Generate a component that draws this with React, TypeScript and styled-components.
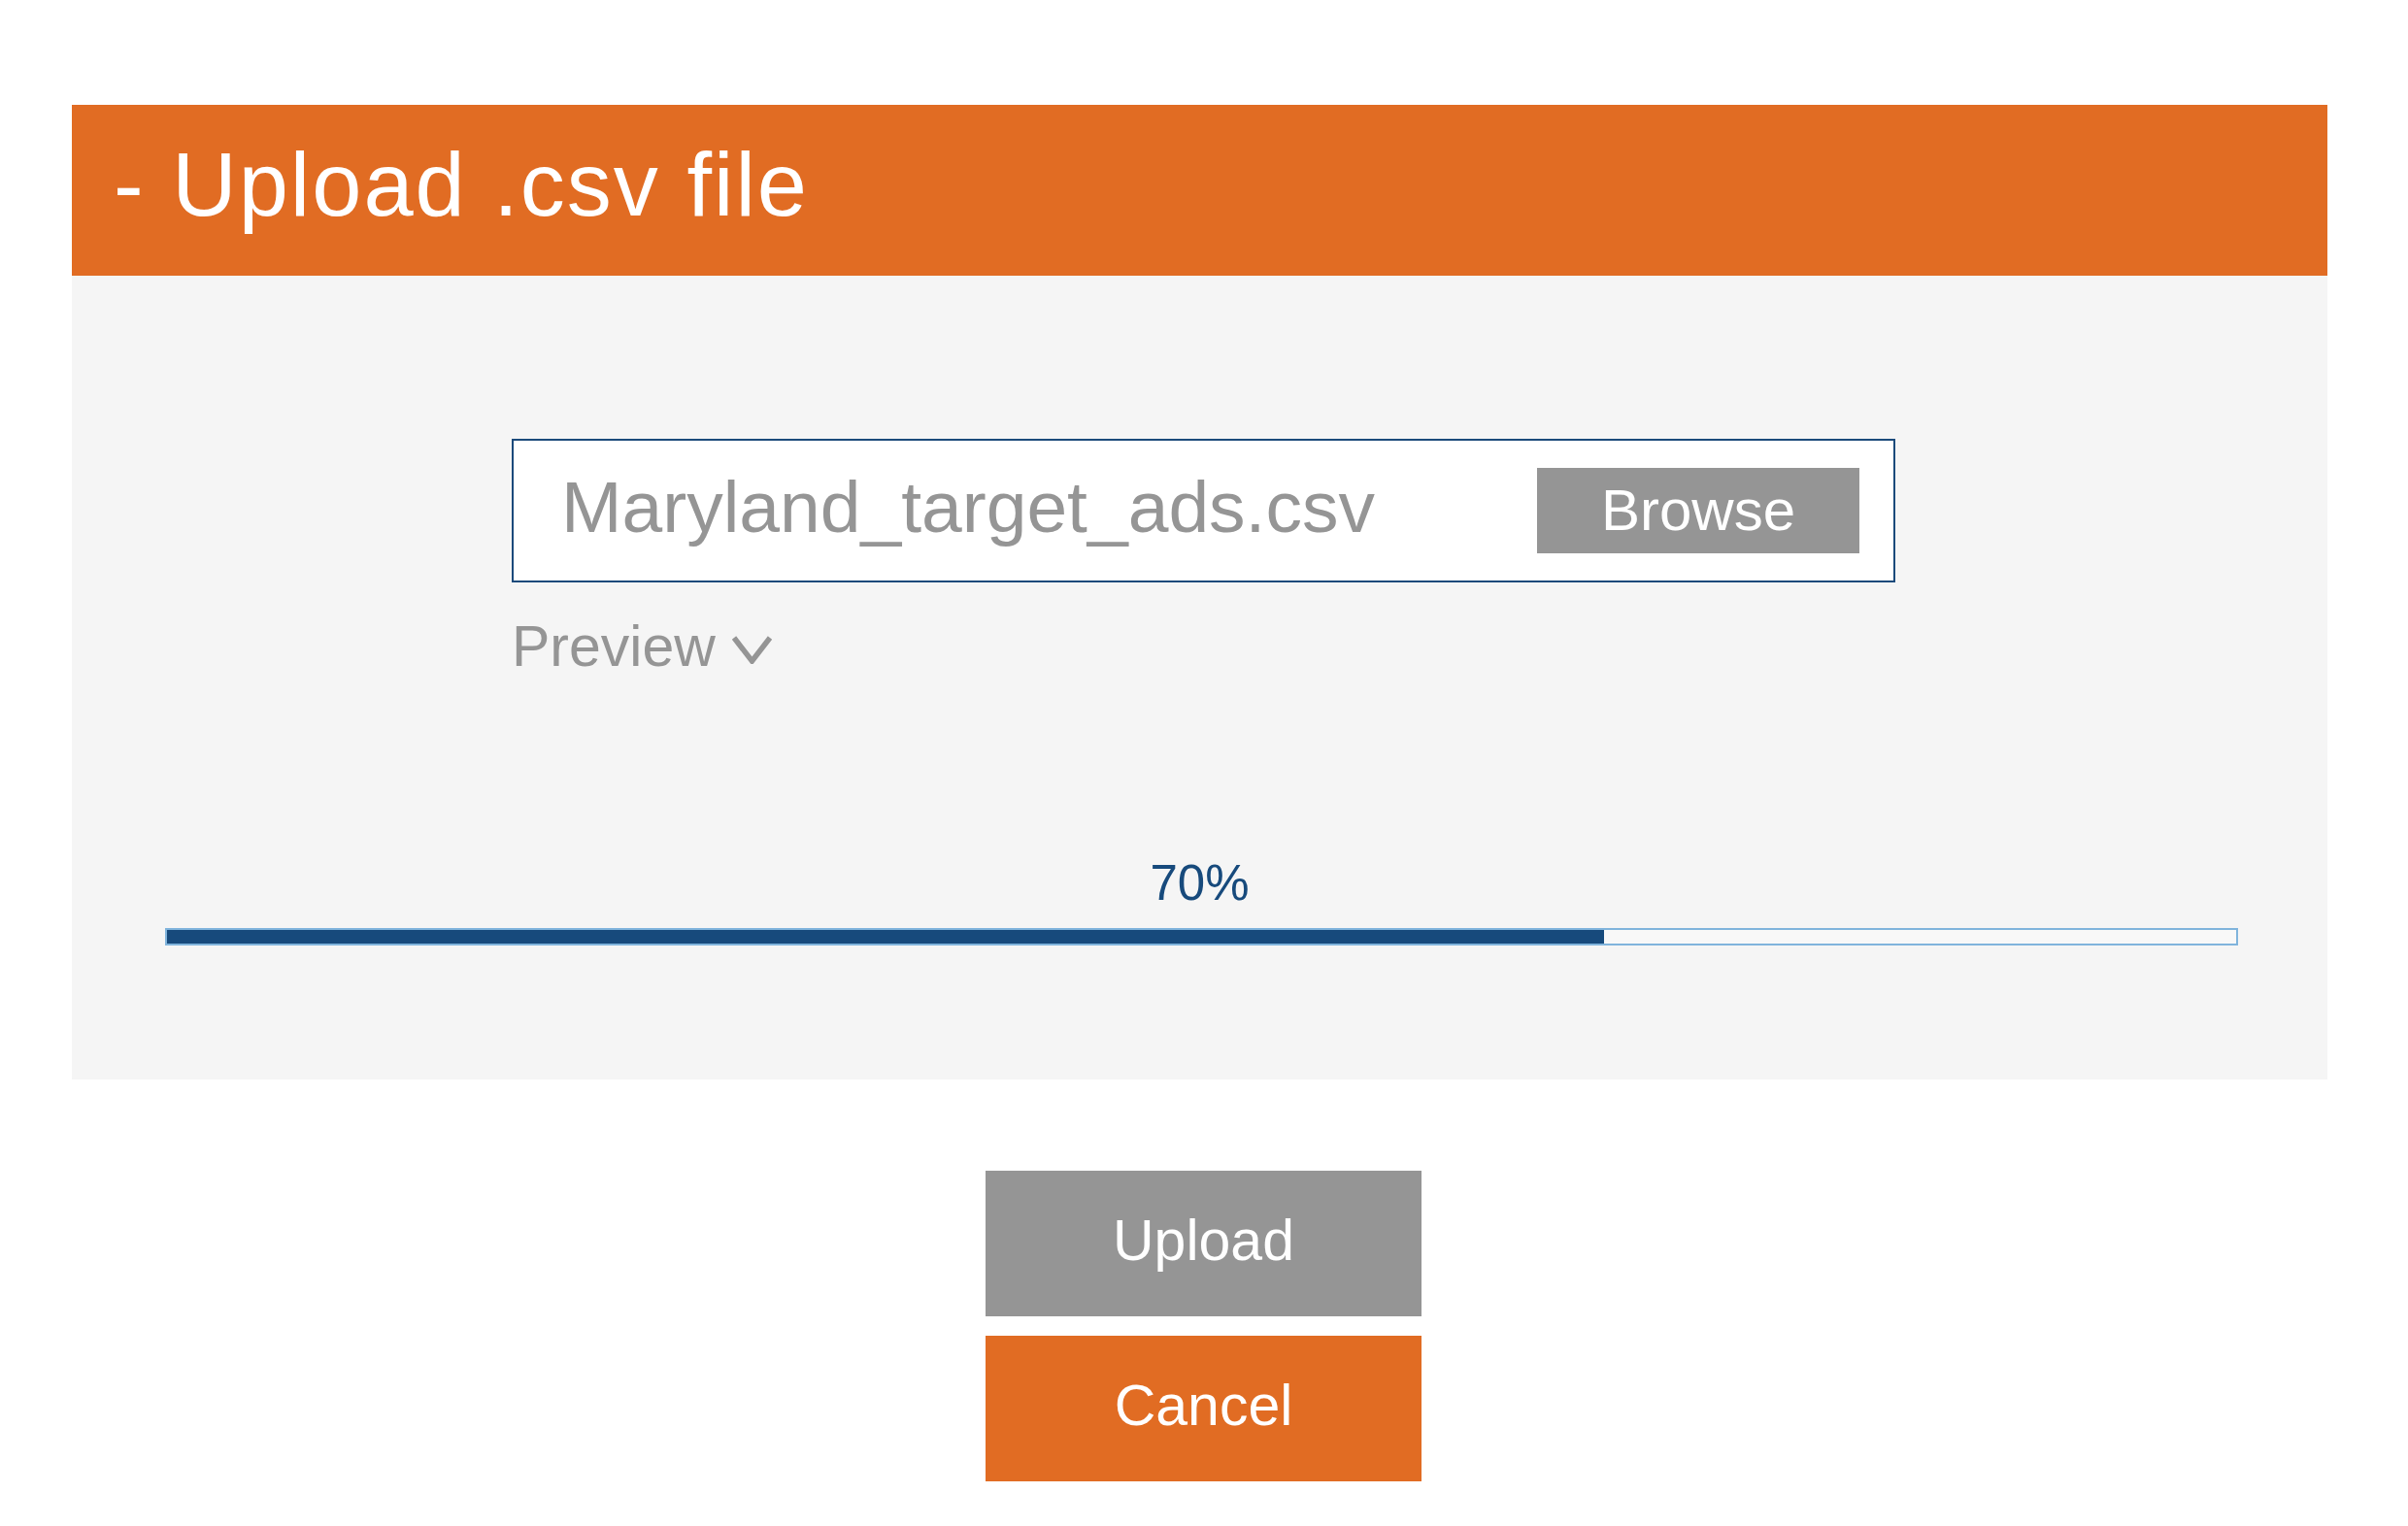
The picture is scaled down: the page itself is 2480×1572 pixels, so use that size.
import React from "react";
import styled, { createGlobalStyle } from "styled-components";

const GlobalStyle = createGlobalStyle`
  html, body {
    margin: 0;
    padding: 0;
    background: #ffffff;
    font-family: "Liberation Sans", Arial, sans-serif;
  }
  * { box-sizing: border-box; }
`;

const Page = styled.div`
  padding: 108px 83px 46px 74px;
  display: flex;
  flex-direction: column;
`;

const Header = styled.div`
  height: 176px;
  background: #e16c23;
  color: #ffffff;
  font-size: 92px;
  line-height: 164px;
  letter-spacing: 2px;
  padding-left: 43px;
  white-space: nowrap;
`;

const Panel = styled.div`
  background: #f5f5f5;
  height: 828px;
  padding-top: 168px;
  display: flex;
  flex-direction: column;
`;

const FileColumn = styled.div`
  margin-left: 453px;
  width: 1425px;
  display: flex;
  flex-direction: column;
  align-items: flex-start;
`;

const FileBox = styled.div`
  width: 1425px;
  height: 148px;
  border: 2px solid #1b4a7b;
  background: #ffffff;
  display: flex;
  align-items: center;
  justify-content: space-between;
  padding: 0 35px 0 49px;
`;

const FileName = styled.span`
  font-size: 75px;
  line-height: 1;
  color: #959595;
  margin-bottom: 8px;
  white-space: nowrap;
`;

const BrowseButton = styled.button`
  width: 332px;
  height: 88px;
  border: none;
  background: #959595;
  color: #ffffff;
  font-family: inherit;
  font-size: 60px;
  line-height: 1;
  padding: 0;
  cursor: pointer;
`;

const PreviewToggle = styled.div`
  margin-top: 36px;
  display: flex;
  align-items: center;
  gap: 16px;
  font-size: 59px;
  line-height: 60px;
  color: #959595;
`;

const Chevron = styled.svg`
  width: 43px;
  height: 30px;
  margin-top: 6px;
`;

const Percent = styled.div`
  margin-top: 188px;
  text-align: center;
  font-size: 51px;
  line-height: 52px;
  color: #174a7c;
  padding-left: 0;
`;

const Track = styled.div`
  margin: 20px 92px 0 96px;
  height: 18px;
  border: 2px solid #80b4dc;
  background: #f8f8f8;
  display: flex;
`;

const Fill = styled.div`
  height: 100%;
  background: #174a7c;
`;

const Actions = styled.div`
  margin-top: 94px;
  padding-left: 8px;
  display: flex;
  flex-direction: column;
  align-items: center;
  gap: 20px;
`;

const ActionButton = styled.button<{ $variant: "gray" | "orange" }>`
  width: 449px;
  height: 150px;
  border: none;
  background: ${(p) => (p.$variant === "gray" ? "#959595" : "#e16c23")};
  color: #ffffff;
  font-family: inherit;
  font-size: 59px;
  line-height: 1;
  padding: 0 0 6px 0;
  cursor: pointer;
`;

export default function App() {
  const progress = 70;
  return (
    <>
      <GlobalStyle />
      <Page>
        <Header>- Upload .csv file</Header>
        <Panel>
          <FileColumn>
            <FileBox>
              <FileName>Maryland_target_ads.csv</FileName>
              <BrowseButton>Browse</BrowseButton>
            </FileBox>
            <PreviewToggle>
              <span>Preview</span>
              <Chevron viewBox="0 0 43 30" fill="none">
                <path
                  d="M3 3 L21.5 27 L40 3"
                  stroke="#959595"
                  strokeWidth="5.5"
                  strokeLinecap="butt"
                  strokeLinejoin="miter"
                />
              </Chevron>
            </PreviewToggle>
          </FileColumn>
          <Percent>{progress}%</Percent>
          <Track>
            <Fill style={{ width: `calc(${progress}% - 12px)` }} />
          </Track>
        </Panel>
        <Actions>
          <ActionButton $variant="gray">Upload</ActionButton>
          <ActionButton $variant="orange">Cancel</ActionButton>
        </Actions>
      </Page>
    </>
  );
}
